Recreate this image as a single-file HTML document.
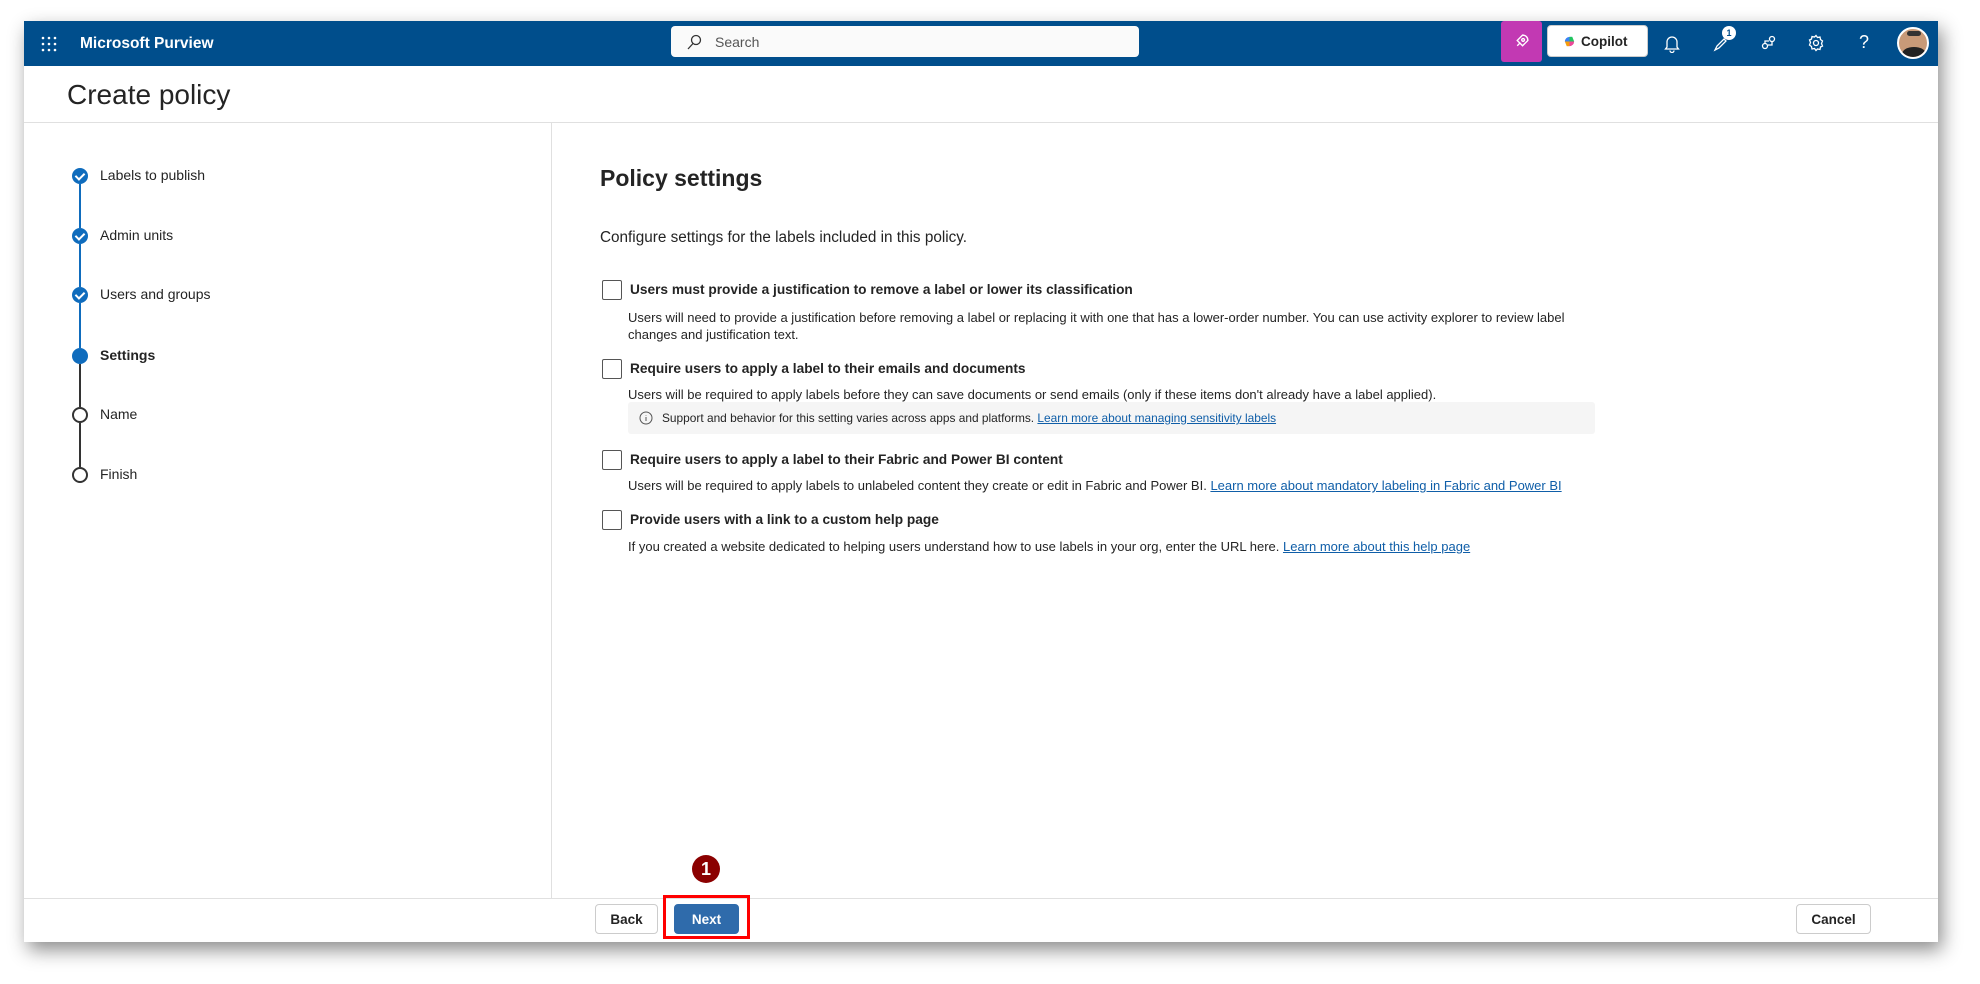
<!DOCTYPE html>
<html><head><meta charset="utf-8"><style>
*{box-sizing:border-box;margin:0;padding:0}
body{width:1980px;height:984px;background:#fff;font-family:"Liberation Sans",sans-serif;color:#242424;position:relative;overflow:hidden}
.win{position:absolute;left:24px;top:21px;width:1914px;height:921px;background:#fff;box-shadow:4px 8px 18px rgba(0,0,0,.45);overflow:hidden}
.abs{position:absolute}
.top{position:absolute;left:0;top:0;width:1914px;height:45px;background:#004e8c}
.chk{position:absolute;width:20px;height:20px;border:1.5px solid #555;border-radius:2px;background:#fff}
.lab{position:absolute;font-weight:bold;font-size:13.7px;color:#242424;white-space:nowrap}
.desc{position:absolute;font-size:13px;color:#242424;line-height:17px;white-space:nowrap}
a{color:#0f5ea8;text-decoration:underline}
.step{position:absolute;left:48px;width:16px;height:16px;border-radius:50%}
.done{background:#0f6cbd}
.done:after{content:"";position:absolute;left:5px;top:3px;width:4px;height:7px;border:solid #fff;border-width:0 2px 2px 0;transform:rotate(45deg)}
.open{border:2px solid #333;background:#fff}
.line{position:absolute;left:55px;width:2px;height:40px}
.st{position:absolute;left:76px;font-size:14px;color:#242424}
.btn{position:absolute;top:883px;height:30px;border:1px solid #ccc;border-radius:4px;background:#fff;font-size:14px;font-weight:bold;display:flex;align-items:center;justify-content:center}
</style></head><body>
<div class="win">
 <div class="top">
  <svg class="abs" style="left:17px;top:15px" width="16" height="16" viewBox="0 0 16 16" fill="#fff"><circle cx="2" cy="2" r="1.3"/><circle cx="8" cy="2" r="1.3"/><circle cx="14" cy="2" r="1.3"/><circle cx="2" cy="8" r="1.3"/><circle cx="8" cy="8" r="1.3"/><circle cx="14" cy="8" r="1.3"/><circle cx="2" cy="14" r="1.3"/><circle cx="8" cy="14" r="1.3"/><circle cx="14" cy="14" r="1.3"/></svg>
  <div class="abs" style="left:56px;top:14px;color:#fff;font-weight:bold;font-size:15.5px">Microsoft Purview</div>
  <div class="abs" style="left:647px;top:5px;width:468px;height:31px;background:#fafafa;border-radius:4px">
   <svg class="abs" style="left:15px;top:8px" width="16" height="16" viewBox="0 0 16 16" fill="none" stroke="#333" stroke-width="1.3"><circle cx="10" cy="6" r="4.5"/><path d="M7 9.5L2 15"/></svg>
   <span class="abs" style="left:44px;top:8px;font-size:14px;color:#555">Search</span>
  </div>
  <div class="abs" style="left:1477px;top:0;width:41px;height:41px;background:#c239b3;border-radius:3px"><svg class="abs" style="left:12px;top:12px" width="17" height="17" viewBox="0 0 16 16" fill="none" stroke="#fff" stroke-width="1.3"><path d="M4 12l3-3M9 2c3 0 5 2 5 5l-5 5-5-5z"/><circle cx="9.5" cy="6.5" r="1.3"/></svg></div>
  <div class="abs" style="left:1523px;top:4px;width:101px;height:32px;background:#fff;border-radius:4px;border:1px solid #ccc;font-size:13.5px;font-weight:bold;color:#242424">
   <svg class="abs" style="left:15px;top:9px" width="13" height="13" viewBox="0 0 14 14"><path d="M2 7a5 5 0 0 1 5-5h3v5z" fill="#3b82f6"/><path d="M12 7a5 5 0 0 1-5 5H4V7z" fill="#ec4899"/><path d="M7 2h3l2 5H7z" fill="#22c55e"/><path d="M2 7h5v5H4z" fill="#f59e0b"/></svg>
   <span class="abs" style="left:33px;top:8px">Copilot</span></div>
  <svg class="abs" style="left:1640px;top:14px" width="16" height="18" viewBox="0 0 16 18" fill="none" stroke="#fff" stroke-width="1.3"><path d="M3 12V7a5 5 0 0 1 10 0v5l1.5 2h-13z M6 15.5a2 2 0 0 0 4 0"/></svg>
  <svg class="abs" style="left:1688px;top:14px" width="18" height="18" viewBox="0 0 18 18" fill="none" stroke="#fff" stroke-width="1.3"><path d="M3 15l4-2 7-7-2-2-7 7z"/></svg>
  <div class="abs" style="left:1698px;top:5px;width:14px;height:14px;border-radius:50%;background:#fff;color:#004e8c;font-size:9px;text-align:center;line-height:14px;font-weight:bold">1</div>
  <svg class="abs" style="left:1736px;top:13px" width="18" height="18" viewBox="0 0 18 18" fill="none" stroke="#fff" stroke-width="1.3"><circle cx="5" cy="12" r="2.5"/><circle cx="12" cy="5" r="2.5"/><path d="M5 9.5V7h4M12 7.5V11H8"/></svg>
  <svg class="abs" style="left:1783px;top:13px" width="18" height="18" viewBox="0 0 18 18" fill="none" stroke="#fff" stroke-width="1.3"><circle cx="9" cy="9" r="2.5"/><path d="M9 1.5l1.5 2 2.5-.5.5 2.5 2 1.5-1 2.5 1 2.5-2 1-.5 2.5-2.5-.5L9 16.5l-1.5-2-2.5.5-.5-2.5-2-1.5 1-2.5-1-2.5 2-1 .5-2.5 2.5.5z"/></svg>
  <div class="abs" style="left:1835px;top:11px;color:#fff;font-size:18px">?</div>
  <div class="abs" style="left:1873px;top:6px;width:32px;height:32px;border-radius:50%;background:#c89a78;border:2px solid #fff;overflow:hidden"><div class="abs" style="left:3px;top:18px;width:24px;height:14px;background:#222;border-radius:50% 50% 0 0"></div><div class="abs" style="left:8px;top:2px;width:14px;height:5px;background:#333;border-radius:4px"></div></div>
 </div>
 <div class="abs" style="left:43px;top:58px;font-size:28px;color:#242424">Create policy</div>
 <div class="abs" style="left:0;top:101px;width:1914px;height:1px;background:#e0e0e0"></div>
 <div class="abs" style="left:527px;top:102px;width:1px;height:775px;background:#e0e0e0"></div>
 <div class="step done" style="top:147px"></div><div class="line" style="top:163px;background:#0f6cbd;height:44px"></div>
 <div class="st" style="top:146px">Labels to publish</div>
 <div class="step done" style="top:207px"></div><div class="line" style="top:223px;background:#0f6cbd;height:43px"></div>
 <div class="st" style="top:206px">Admin units</div>
 <div class="step done" style="top:266px"></div><div class="line" style="top:282px;background:#0f6cbd;height:45px"></div>
 <div class="st" style="top:265px">Users and groups</div>
 <div class="abs" style="left:48px;top:327px;width:16px;height:16px;border-radius:50%;background:#0f6cbd"></div>
 <div class="line" style="top:343px;background:#333;height:43px"></div>
 <div class="st" style="top:326px;font-weight:bold">Settings</div>
 <div class="step open" style="top:386px"></div><div class="line" style="top:402px;background:#333;height:44px"></div>
 <div class="st" style="top:385px">Name</div>
 <div class="step open" style="top:446px"></div>
 <div class="st" style="top:445px">Finish</div>
 <div class="abs" style="left:576px;top:144px;font-size:23px;font-weight:bold;color:#242424">Policy settings</div>
 <div class="abs" style="left:576px;top:208px;font-size:15.3px;color:#242424">Configure settings for the labels included in this policy.</div>
 <div class="chk" style="left:578px;top:259px"></div>
 <div class="lab" style="left:606px;top:261px">Users must provide a justification to remove a label or lower its classification</div>
 <div class="desc" style="left:604px;top:288px">Users will need to provide a justification before removing a label or replacing it with one that has a lower-order number. You can use activity explorer to review label<br>changes and justification text.</div>
 <div class="chk" style="left:578px;top:338px"></div>
 <div class="lab" style="left:606px;top:340px">Require users to apply a label to their emails and documents</div>
 <div class="desc" style="left:604px;top:365px">Users will be required to apply labels before they can save documents or send emails (only if these items don't already have a label applied).</div>
 <div class="abs" style="left:604px;top:381px;width:967px;height:32px;background:#f5f5f5;border-radius:3px">
  <svg class="abs" style="left:11px;top:9px" width="14" height="14" viewBox="0 0 14 14" fill="none" stroke="#555"><circle cx="7" cy="7" r="6"/><path d="M7 6v4M7 4v.5"/></svg>
  <span class="abs" style="left:34px;top:9px;font-size:11.9px;white-space:nowrap">Support and behavior for this setting varies across apps and platforms. <a>Learn more about managing sensitivity labels</a></span>
 </div>
 <div class="chk" style="left:578px;top:429px"></div>
 <div class="lab" style="left:606px;top:431px">Require users to apply a label to their Fabric and Power BI content</div>
 <div class="desc" style="left:604px;top:456px">Users will be required to apply labels to unlabeled content they create or edit in Fabric and Power BI. <a>Learn more about mandatory labeling in Fabric and Power BI</a></div>
 <div class="chk" style="left:578px;top:489px"></div>
 <div class="lab" style="left:606px;top:491px">Provide users with a link to a custom help page</div>
 <div class="desc" style="left:604px;top:517px">If you created a website dedicated to helping users understand how to use labels in your org, enter the URL here. <a>Learn more about this help page</a></div>
 <div class="abs" style="left:0;top:877px;width:1914px;height:1px;background:#e0e0e0"></div>
 <div class="btn" style="left:571px;width:63px;font-size:13.5px">Back</div>
 <div class="btn" style="left:650px;width:65px;background:#2f6bab;border-color:#2f6bab;color:#fff;font-size:13.5px">Next</div>
 <div class="abs" style="left:639px;top:874px;width:87px;height:44px;border:3px solid #f00"></div>
 <div class="btn" style="left:1772px;width:75px;font-size:13.5px">Cancel</div>
 <div class="abs" style="left:668px;top:834px;width:28px;height:28px;border-radius:50%;background:#8b0000;color:#fff;font-weight:bold;font-size:18px;text-align:center;line-height:28px">1</div>
</div>
</body></html>
